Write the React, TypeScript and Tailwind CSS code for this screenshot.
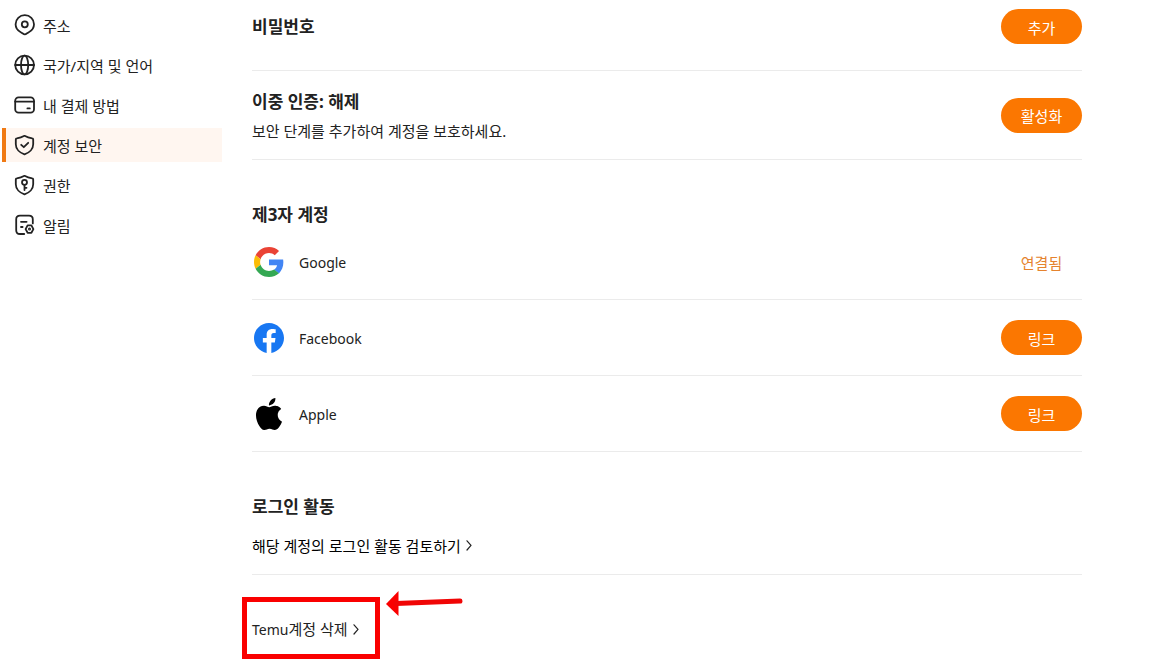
import type { ReactNode } from 'react';
import clsx from 'clsx';

interface NavItem {
  label: string;
  icon: ReactNode;
  active?: boolean;
}

interface LinkedAccount {
  name: string;
  logo: ReactNode;
  connected: boolean;
}

function NavIcon({ children }: { children: ReactNode }) {
  return (
    <svg
      viewBox="0 0 22 22"
      className="w-[22px] h-[22px] shrink-0"
      fill="none"
      stroke="#222"
      strokeWidth="1.8"
      strokeLinecap="round"
      strokeLinejoin="round"
      aria-hidden="true"
    >
      {children}
    </svg>
  );
}

const SHIELD = 'M10.5 1.8C13 3.2 15.6 4 18.2 4.4C19 4.5 19.2 4.9 19.2 5.5V10.2C19.2 15 15.4 18.8 10.5 20.3C5.6 18.8 1.8 15 1.8 10.2V5.5C1.8 4.9 2 4.5 2.8 4.4C5.4 4 8 3.2 10.5 1.8Z';

const navItems: NavItem[] = [
  {
    label: '주소',
    icon: (
      <NavIcon>
        <path d="M10.8 1.2C16 1.2 20 5.2 20 10.2C20 13.8 17.9 16.6 14.8 18.2C13.2 19 12.1 20.4 10.8 20.4C9.5 20.4 8.4 19 6.8 18.2C3.7 16.6 1.6 13.8 1.6 10.2C1.6 5.2 5.6 1.2 10.8 1.2Z" />
        <circle cx="10.8" cy="10.3" r="3" />
      </NavIcon>
    ),
  },
  {
    label: '국가/지역 및 언어',
    icon: (
      <NavIcon>
        <circle cx="10.6" cy="11" r="9.4" />
        <ellipse cx="10.6" cy="11" rx="3.6" ry="9.4" />
        <path d="M1.2 11H20" />
      </NavIcon>
    ),
  },
  {
    label: '내 결제 방법',
    icon: (
      <NavIcon>
        <rect x="1.2" y="3.4" width="18.8" height="15.2" rx="3.4" />
        <path d="M1.2 7.6H20M13.4 14.4H15.8" />
      </NavIcon>
    ),
  },
  {
    label: '계정 보안',
    active: true,
    icon: (
      <NavIcon>
        <path d={SHIELD} />
        <path d="M7.2 10.8L9.8 13.2L14.2 8.8" />
      </NavIcon>
    ),
  },
  {
    label: '권한',
    icon: (
      <NavIcon>
        <path d={SHIELD} />
        <circle cx="10.5" cy="8.3" r="2.5" />
        <path d="M10.5 10.8V16M10.5 13.8H12.5" />
      </NavIcon>
    ),
  },
  {
    label: '알림',
    icon: (
      <NavIcon>
        <path d="M10.2 20H6C3.6 20 2.2 18.6 2.2 16.2V5.2C2.2 2.8 3.6 1.6 6 1.6H15C17.4 1.6 18.8 2.8 18.8 5.2V9.4" />
        <path d="M7 7.8H12.6M7 13H8.6" />
        <path d="M13.6 11.4H17.4L19.4 15.1L17.4 18.8H13.6L11.6 15.1Z" />
        <circle cx="15.5" cy="15.1" r="0.6" />
      </NavIcon>
    ),
  },
];

function GoogleLogo() {
  return (
    <svg viewBox="0 0 48 48" className="w-[30px] h-[30px]" aria-hidden="true">
      <path fill="#EA4335" d="M24 9.5c3.54 0 6.71 1.22 9.21 3.6l6.85-6.85C35.9 2.38 30.47 0 24 0 14.62 0 6.51 5.38 2.56 13.22l7.98 6.19C12.43 13.72 17.74 9.5 24 9.5z" />
      <path fill="#4285F4" d="M46.98 24.55c0-1.57-.15-3.09-.38-4.55H24v9.02h12.94c-.58 2.96-2.26 5.48-4.78 7.18l7.73 6c4.51-4.18 7.09-10.36 7.09-17.65z" />
      <path fill="#FBBC05" d="M10.53 28.59c-.48-1.45-.76-2.99-.76-4.59s.27-3.14.76-4.59l-7.98-6.19C.92 16.46 0 20.12 0 24c0 3.88.92 7.54 2.56 10.78l7.97-6.19z" />
      <path fill="#34A853" d="M24 48c6.48 0 11.93-2.13 15.89-5.81l-7.73-6c-2.15 1.45-4.92 2.3-8.16 2.3-6.26 0-11.57-4.22-13.47-9.91l-7.98 6.19C6.51 42.62 14.62 48 24 48z" />
    </svg>
  );
}

function FacebookLogo() {
  return (
    <svg viewBox="0 0 24 24" className="w-[30px] h-[30px]" aria-hidden="true">
      <path fill="#1877F2" d="M24 12.073c0-6.627-5.373-12-12-12s-12 5.373-12 12c0 5.99 4.388 10.954 10.125 11.854v-8.385H7.078v-3.47h3.047V9.43c0-3.007 1.792-4.669 4.533-4.669 1.312 0 2.686.235 2.686.235v2.953H15.83c-1.491 0-1.956.925-1.956 1.874v2.25h3.328l-.532 3.47h-2.796v8.385C19.612 23.027 24 18.062 24 12.073z" />
    </svg>
  );
}

function AppleLogo() {
  return (
    <svg viewBox="0 0 24 24" className="w-8 h-8" aria-hidden="true">
      <path fill="#000" d="M12.152 6.896c-.948 0-2.415-1.078-3.96-1.04-2.04.027-3.91 1.183-4.961 3.014-2.117 3.675-.546 9.103 1.519 12.09 1.013 1.454 2.208 3.09 3.792 3.039 1.52-.065 2.09-.987 3.935-.987 1.831 0 2.35.987 3.96.948 1.637-.026 2.676-1.48 3.676-2.948 1.156-1.688 1.636-3.325 1.662-3.415-.039-.013-3.182-1.221-3.22-4.857-.026-3.04 2.48-4.494 2.597-4.559-1.429-2.09-3.623-2.324-4.39-2.376-2-.156-3.675 1.09-4.61 1.09zM15.53 3.83c.843-1.012 1.4-2.427 1.245-3.83-1.207.052-2.662.805-3.532 1.818-.78.896-1.454 2.338-1.273 3.714 1.338.104 2.715-.688 3.559-1.701" />
    </svg>
  );
}

const accounts: LinkedAccount[] = [
  { name: 'Google', logo: <GoogleLogo />, connected: true },
  { name: 'Facebook', logo: <FacebookLogo />, connected: false },
  { name: 'Apple', logo: <AppleLogo />, connected: false },
];

function Chevron() {
  return (
    <svg
      viewBox="0 0 6 12"
      className="w-[6px] h-3 shrink-0"
      fill="none"
      stroke="#222"
      strokeWidth="1.2"
      strokeLinecap="round"
      strokeLinejoin="round"
      aria-hidden="true"
    >
      <path d="M1 0.8L5 5.4L1 10" />
    </svg>
  );
}

function SectionTitle({ children }: { children: ReactNode }) {
  return <h2 className="text-[17px] leading-[18px] font-bold">{children}</h2>;
}

function PillButton({ children, label }: { children: ReactNode; label?: string }) {
  return (
    <button
      type="button"
      aria-label={label}
      className="w-[81px] h-[35px] shrink-0 rounded-full bg-[#fb7701] pt-[2px] text-[15px] leading-5 text-white"
    >
      {children}
    </button>
  );
}

export default function App() {
  return (
    <div className="flex min-h-screen bg-white font-['Noto_Sans','Noto_Sans_CJK_KR',sans-serif] text-[15px] leading-5 text-[#222]">
      {/* Sidebar */}
      <nav className="w-[220px] shrink-0 ml-[2px] pt-2">
        <ul className="flex flex-col gap-[6px]">
          {navItems.map((item) => (
            <li key={item.label}>
              <a
                href="#"
                aria-current={item.active ? 'page' : undefined}
                className={clsx(
                  'flex items-center gap-[7px] h-[34px] pl-2 border-l-4',
                  item.active ? 'border-[#f07a14] bg-[#fff6f0]' : 'border-transparent'
                )}
              >
                {item.icon}
                <span className="pt-[2px]">{item.label}</span>
              </a>
            </li>
          ))}
        </ul>
      </nav>

      {/* Account security */}
      <main className="flex-1 min-w-0 ml-[30px] mr-[78px]">
        <section className="flex items-center justify-between pt-[9px] pb-[26px] border-b border-[#ebebeb]">
          <SectionTitle>비밀번호</SectionTitle>
          <PillButton>추가</PillButton>
        </section>

        <section className="flex items-center justify-between h-[89px] border-b border-[#ebebeb]">
          <div className="pt-1">
            <SectionTitle>이중 인증: 해제</SectionTitle>
            <p className="mt-[10px]">보안 단계를 추가하여 계정을 보호하세요.</p>
          </div>
          <PillButton>활성화</PillButton>
        </section>

        <section className="pt-[46px]">
          <SectionTitle>제3자 계정</SectionTitle>
          <ul>
            {accounts.map((account) => (
              <li key={account.name} className="flex items-center h-[76px] border-b border-[#ebebeb]">
                <div className="flex justify-center w-[34px] shrink-0">{account.logo}</div>
                <span className="ml-[13px] pt-[2px] flex-1 text-sm">{account.name}</span>
                {account.connected ? (
                  <span className="w-[81px] pt-[2px] text-center text-[#e5832e]">연결됨</span>
                ) : (
                  <PillButton label={`${account.name} 링크`}>링크</PillButton>
                )}
              </li>
            ))}
          </ul>
        </section>

        <section className="pt-[46px] pb-[18px] border-b border-[#ebebeb]">
          <SectionTitle>로그인 활동</SectionTitle>
          <a href="#" className="mt-5 inline-flex items-center gap-[5px] align-top text-black">
            해당 계정의 로그인 활동 검토하기
            <Chevron />
          </a>
        </section>

        <div className="pt-11 pb-6">
          <div className="relative inline-flex align-top">
            <a href="#" className="inline-flex items-center gap-[5px]">
              <span>
                <span className="text-sm">Temu</span>계정 삭제
              </span>
              <Chevron />
            </a>
            {/* Highlight box and pointer over the delete link */}
            <div className="pointer-events-none absolute -left-[10px] -top-[22px] w-[138px] h-[62px] border-[5px] border-[#fa0000]" />
            <svg
              viewBox="0 0 78 26"
              className="pointer-events-none absolute left-[134px] -top-7 w-[78px] h-[26px]"
              aria-hidden="true"
            >
              <path d="M0 13L12.5 0V25Z" fill="#fa0000" />
              <path d="M10 12.5L74 10" stroke="#f00505" strokeWidth="5" strokeLinecap="round" />
            </svg>
          </div>
        </div>
      </main>
    </div>
  );
}
